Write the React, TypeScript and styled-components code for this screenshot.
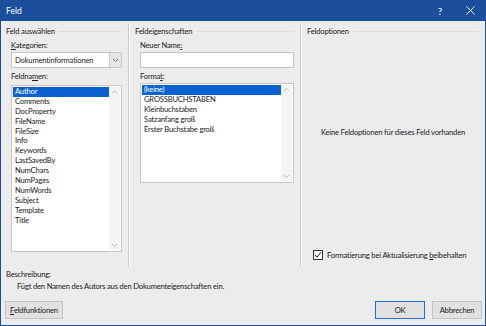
import React, { useState } from 'react';
import styled, { createGlobalStyle } from 'styled-components';

const GlobalStyle = createGlobalStyle`
    html, body {
        margin: 0;
        padding: 0;
        background: #ececec;
    }
    * {
        box-sizing: border-box;
    }
`

const Window = styled.div`
    width: 486px;
    height: 326px;
    display: flex;
    flex-direction: column;
    background: #ececec;
    border: 1px solid #1b4f9e;
    border-top: none;
    font-family: Lato, "Open Sans", sans-serif;
    font-size: 7.6px;
    letter-spacing: -0.18px;
    color: #1a1a1a;
    overflow: hidden;
`

const TitleBar = styled.div`
    height: 21px;
    background: #1b4f9e;
    display: flex;
    align-items: center;
    padding: 0 0 0 5px;
    color: #fff;
    font-size: 8.6px;
    letter-spacing: 0;
    flex-shrink: 0;
`

const TitleText = styled.span`
    flex: 1;
`

const TitleButton = styled.div`
    width: 30px;
    height: 21px;
    display: flex;
    align-items: center;
    justify-content: center;
    color: #fff;
    font-size: 10px;
`

const Columns = styled.div`
    display: flex;
    height: 245px;
    padding-top: 5px;
    flex-shrink: 0;
`

const Column = styled.div<{ $width?: number }>`
    width: ${p => p.$width ? `${p.$width}px` : 'auto'};
    flex: ${p => p.$width ? '0 0 auto' : '1'};
    display: flex;
    flex-direction: column;
    padding: 0 6px 0 5px;
`

const Divider = styled.div`
    width: 2px;
    margin-top: -2px;
    border-left: 1px solid #c9c9c9;
    border-right: 1px solid #fafafa;
    flex-shrink: 0;
`

const GroupHeader = styled.div`
    display: flex;
    align-items: center;
    gap: 4px;
    height: 10px;
    margin-bottom: 4px;
    white-space: nowrap;
    &::after {
        content: "";
        flex: 1;
        height: 1px;
        background: #dcdcdc;
    }
`

const Inner = styled.div`
    display: flex;
    flex-direction: column;
    padding-left: 5px;
    flex: 1;
`

const Label = styled.div<{ $gap?: number }>`
    height: 10px;
    line-height: 10px;
    margin-bottom: ${p => p.$gap ?? 2}px;
`

const U = styled.span`
    text-decoration: underline;
    text-underline-offset: 1px;
`

const SelectBox = styled.div`
    height: 16px;
    background: #fff;
    border: 1px solid #c6c6c6;
    display: flex;
    align-items: center;
    padding-left: 3px;
    margin-bottom: 3px;
`

const SelectValue = styled.span`
    flex: 1;
`

const SelectArrow = styled.div`
    width: 12px;
    height: 14px;
    background: #e6e6e6;
    border-left: 1px solid #cfcfcf;
    display: flex;
    align-items: center;
    justify-content: center;
`

const TextInput = styled.div`
    height: 16px;
    background: #fff;
    border: 1px solid #c6c6c6;
    margin-bottom: 3px;
`

const ListBox = styled.div<{ $height: number }>`
    height: ${p => p.$height}px;
    background: #fff;
    border: 1px solid #c6c6c6;
    display: flex;
    padding: 1px;
`

const ListItems = styled.div`
    flex: 1;
    display: flex;
    flex-direction: column;
`

const ListItem = styled.div<{ $selected?: boolean }>`
    height: 9.9px;
    line-height: 9.9px;
    padding-left: 2px;
    white-space: nowrap;
    background: ${p => p.$selected ? '#0a62d0' : 'transparent'};
    color: ${p => p.$selected ? '#fff' : '#1a1a1a'};
`

const ScrollBar = styled.div`
    width: 11px;
    display: flex;
    flex-direction: column;
    justify-content: space-between;
    align-items: center;
    background: #f4f4f4;
    padding: 2px 0;
`

const EmptyOptions = styled.div`
    flex: 1;
    display: flex;
    align-items: center;
    justify-content: center;
    padding-bottom: 26px;
`

const CheckRow = styled.label`
    display: flex;
    align-items: center;
    gap: 4px;
    padding-left: 6px;
    margin-bottom: 6px;
    white-space: nowrap;
`

const CheckBox = styled.div`
    width: 10px;
    height: 10px;
    border: 1px solid #333;
    background: #fff;
    display: flex;
    align-items: center;
    justify-content: center;
`

const Description = styled.div`
    padding: 3px 5px 0 5px;
    height: 33px;
    flex-shrink: 0;
`

const DescriptionLine = styled.div<{ $indent?: boolean }>`
    height: 10px;
    line-height: 10px;
    padding-left: ${p => p.$indent ? '11px' : '0'};
    margin-bottom: 2px;
`

const Footer = styled.div`
    display: flex;
    align-items: center;
    padding: 2px 3px 0 4px;
    gap: 7px;
`

const Button = styled.button<{ $primary?: boolean; $width?: number }>`
    height: 18px;
    width: ${p => p.$width ?? 50}px;
    flex-shrink: 0;
    padding: 0 3px;
    background: #e1e1e1;
    border: 1px solid ${p => p.$primary ? '#1f6fd6' : '#c4c4c4'};
    font-family: inherit;
    font-size: inherit;
    letter-spacing: inherit;
    color: #1a1a1a;
    white-space: nowrap;
`

const Spacer = styled.div`
    flex: 1;
`

const UpArrow = () => (
    <svg width="7" height="5" viewBox="0 0 7 5">
        <path d="M1 4 L3.5 1.5 L6 4" stroke="#b8b8b8" strokeWidth="1" fill="none" />
    </svg>
)

const DownArrow = ({ color = '#b8b8b8' }: { color?: string }) => (
    <svg width="7" height="5" viewBox="0 0 7 5">
        <path d="M1 1 L3.5 3.5 L6 1" stroke={color} strokeWidth="1" fill="none" />
    </svg>
)

const fieldNames = [
    'Author', 'Comments', 'DocProperty', 'FileName', 'FileSize', 'Info', 'Keywords',
    'LastSavedBy', 'NumChars', 'NumPages', 'NumWords', 'Subject', 'Template', 'Title',
]

const formats = ['(keine)', 'GROSSBUCHSTABEN', 'Kleinbuchstaben', 'Satzanfang groß', 'Erster Buchstabe groß']

export default function App() {
    const [field, setField] = useState('Author')
    const [format, setFormat] = useState('(keine)')
    const [keep, setKeep] = useState(true)

    return (
        <>
            <GlobalStyle />
            <Window>
                <TitleBar>
                    <TitleText>Feld</TitleText>
                    <TitleButton>?</TitleButton>
                    <TitleButton>
                        <svg width="9" height="9" viewBox="0 0 9 9">
                            <path d="M0.5 0.5 L8.5 8.5 M8.5 0.5 L0.5 8.5" stroke="#fff" strokeWidth="1" />
                        </svg>
                    </TitleButton>
                </TitleBar>

                <Columns>
                    <Column $width={127}>
                        <GroupHeader>Feld auswählen</GroupHeader>
                        <Inner>
                            <Label><U>K</U>ategorien:</Label>
                            <SelectBox>
                                <SelectValue>Dokumentinformationen</SelectValue>
                                <SelectArrow><DownArrow color="#777" /></SelectArrow>
                            </SelectBox>
                            <Label $gap={4}>Feldna<U>m</U>en:</Label>
                            <ListBox $height={167}>
                                <ListItems>
                                    {fieldNames.map(n => (
                                        <ListItem key={n} $selected={n === field} onClick={() => setField(n)}>{n}</ListItem>
                                    ))}
                                </ListItems>
                                <ScrollBar><UpArrow /><DownArrow /></ScrollBar>
                            </ListBox>
                        </Inner>
                    </Column>
                    <Divider />
                    <Column $width={170}>
                        <GroupHeader>Feldeigenschaften</GroupHeader>
                        <Inner>
                            <Label>Neuer Name<U>:</U></Label>
                            <TextInput />
                            <Label>Forma<U>t</U>:</Label>
                            <ListBox $height={100}>
                                <ListItems>
                                    {formats.map(f => (
                                        <ListItem key={f} $selected={f === format} onClick={() => setFormat(f)}>{f}</ListItem>
                                    ))}
                                </ListItems>
                                <ScrollBar><UpArrow /><DownArrow /></ScrollBar>
                            </ListBox>
                        </Inner>
                    </Column>
                    <Divider />
                    <Column>
                        <GroupHeader>Feldoptionen</GroupHeader>
                        <EmptyOptions>Keine Feldoptionen für dieses Feld vorhanden</EmptyOptions>
                        <CheckRow onClick={() => setKeep(!keep)}>
                            <CheckBox>
                                {keep && (
                                    <svg width="8" height="8" viewBox="0 0 8 8">
                                        <path d="M1 4 L3 6.2 L7 1.2" stroke="#222" strokeWidth="1" fill="none" />
                                    </svg>
                                )}
                            </CheckBox>
                            <span>Formatierung bei Aktualisierung <U>b</U>eibehalten</span>
                        </CheckRow>
                    </Column>
                </Columns>

                <Description>
                    <DescriptionLine>Beschreibung:</DescriptionLine>
                    <DescriptionLine $indent>Fügt den Namen des Autors aus den Dokumenteigenschaften ein.</DescriptionLine>
                </Description>

                <Footer>
                    <Button $width={58}><U>F</U>eldfunktionen</Button>
                    <Spacer />
                    <Button $primary>OK</Button>
                    <Button>Abbrechen</Button>
                </Footer>
            </Window>
        </>
    )
}
